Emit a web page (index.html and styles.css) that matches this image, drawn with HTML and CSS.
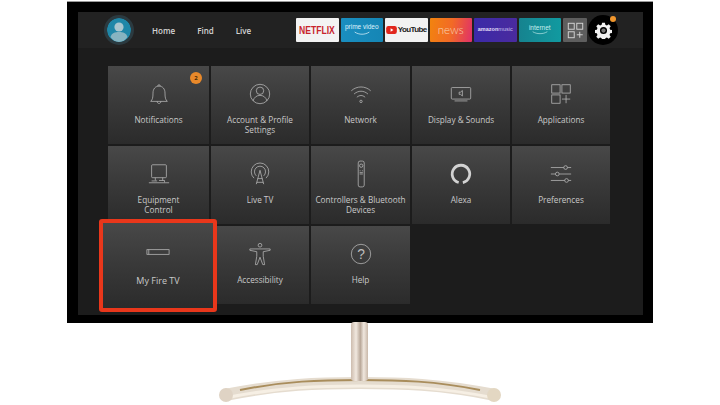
FILE: index.html
```html
<!DOCTYPE html>
<html lang="en">
<head>
<meta charset="utf-8">
<title>Fire TV Settings</title>
<link rel="stylesheet" href="styles.css">
</head>
<body>
<main class="display">
  <div class="monitor">
    <div class="screen">
      <header class="topbar">
        <div class="avatar">
          <svg viewBox="0 0 24 24" width="24" height="24"><circle cx="12" cy="12" r="12" fill="#1f87a8"/><circle cx="12" cy="9" r="4.6" fill="#a9c6cf"/><path d="M3.5 19c1-4 4.500-5 8.500-5s7.500 1 8.500 5c-2 3-5 5-8.500 5s-6.500-2-8.500-5z" fill="#86b4c1"/></svg>
        </div>
        <nav class="links"><span>Home</span><span>Find</span><span>Live</span></nav>
        <div class="apps">
          <div class="app app-netflix"><span>NETFLIX</span></div>
          <div class="app app-prime"><span>prime video</span><svg viewBox="0 0 30 6" width="22" height="5"><path d="M5 1c6 4 14 4 20 0" fill="none" stroke="#dff3fb" stroke-width="1"/></svg></div>
          <div class="app app-youtube"><svg viewBox="0 0 12 9" width="11" height="8"><rect width="12" height="9" rx="2.500" fill="#e1261c"/><path d="M5 2.500v4l3.200-2z" fill="#fff"/></svg><span>YouTube</span></div>
          <div class="app app-news">news</div>
          <div class="app app-music"><span><b>amazon</b>music</span></div>
          <div class="app app-internet"><span>internet</span><svg viewBox="0 0 30 6" width="20" height="4"><path d="M4 1c6 4 16 4 22 0" fill="none" stroke="#bfeaea" stroke-width="1"/></svg></div>
          <div class="app app-all">
            <svg viewBox="0 0 20 20" width="17" height="17" fill="none" stroke="#d6d6d6" stroke-width="1.100"><rect x="1.500" y="1.500" width="7" height="7"/><rect x="11.500" y="1.500" width="7" height="7"/><rect x="1.500" y="11.500" width="7" height="7"/><path d="M15 11.500v7M11.500 15h7"/></svg>
          </div>
        </div>
        <div class="gear">
          <svg viewBox="0 0 24 24" width="17" height="17"><path fill-rule="evenodd" fill="#f2f2f2" d="M10 1h4l.6 3 2.200.9 2.600-1.700 2.800 2.800-1.700 2.600.9 2.200 3 .6v4l-3 .6-.9 2.200 1.700 2.600-2.800 2.800-2.600-1.700-2.200.9-.6 3h-4l-.6-3-2.200-.9-2.600 1.700-2.800-2.800 1.700-2.600-.9-2.200-3-.6v-4l3-.6.9-2.200-1.700-2.600 2.800-2.800 2.600 1.700 2.200-.9zM12 7a5 5 0 1 0 0 10 5 5 0 0 0 0-10z"/><circle cx="12" cy="12" r="3" fill="#777"/></svg>
          <i class="gear-dot"></i>
        </div>
      </header>

      <section class="grid">
        <article class="tile">
          <b class="badge">2</b>
          <svg class="ico" viewBox="0 0 26 26"><path d="M4 21c2-2 2.500-4 2.500-9 0-4.500 2.500-7.500 6.500-7.500s6.500 3 6.500 7.500c0 5 .5 7 2.500 9zM11.500 4.500c0-2 3-2 3 0M11 21c0 3 4 3 4 0"/></svg>
          <p>Notifications</p>
        </article>
        <article class="tile">
          <svg class="ico" viewBox="0 0 26 26"><circle cx="13" cy="13" r="10.500"/><circle cx="13" cy="9.500" r="4"/><path d="M5.500 20.500c1-4 4-6 7.500-6s6.500 2 7.500 6"/></svg>
          <p>Account &amp; Profile<br>Settings</p>
        </article>
        <article class="tile">
          <svg class="ico" viewBox="0 0 26 26"><path d="M2.500 9.500c6-5.500 15-5.500 21 0M5.500 13c4.500-4 10.500-4 15 0M8.500 16.500c3-2.500 6-2.500 9 0"/><circle cx="13" cy="21" r="1.300"/></svg>
          <p>Network</p>
        </article>
        <article class="tile">
          <svg class="ico" viewBox="0 0 26 26"><rect x="2.500" y="6" width="21" height="12.500" rx="1"/><path d="M6 20.500h14M11 11h1.500l2-1.800v6l-2-1.800H11z"/></svg>
          <p>Display &amp; Sounds</p>
        </article>
        <article class="tile">
          <svg class="ico" viewBox="0 0 26 26"><rect x="3" y="3" width="9" height="9"/><rect x="14" y="3" width="9" height="9"/><rect x="3" y="14" width="9" height="9"/><path d="M18.500 14v9M14 18.500h9"/></svg>
          <p>Applications</p>
        </article>

        <article class="tile">
          <svg class="ico" viewBox="0 0 26 26"><rect x="5" y="3" width="16" height="14" rx="1"/><path d="M9 17v3M17 17v3M2 22.500h22M5 20.500h6M13 20h6v2"/></svg>
          <p>Equipment<br>Control</p>
        </article>
        <article class="tile">
          <svg class="ico" viewBox="0 0 26 26"><path d="M6.500 17.500a9.500 9.500 0 1 1 13 0M9 15a6 6 0 1 1 8 0M9 24l4-15 4 15M10.500 18h5M9.500 22h7"/></svg>
          <p>Live TV</p>
        </article>
        <article class="tile">
          <svg class="ico" viewBox="0 0 26 26"><rect x="10" y="-1" width="6.500" height="28" rx="2"/><circle cx="13.200" cy="4" r="1.800"/><path d="M11.500 9.500h1M14 9.500h1M11.500 11.500h3.500M11.500 13h3.500"/></svg>
          <p>Controllers &amp; Bluetooth<br>Devices</p>
        </article>
        <article class="tile">
          <svg class="ico ico-alexa" viewBox="0 0 26 26"><path d="M10.500 22.200A9.500 9.500 0 1 1 15 22.300"/></svg>
          <p>Alexa</p>
        </article>
        <article class="tile">
          <svg class="ico" viewBox="0 0 26 26"><path d="M2 6h14M20 6h4M2 13h5M11 13h13M2 20h15M21 20h3"/><circle cx="18" cy="6" r="2"/><circle cx="9" cy="13" r="2"/><circle cx="19" cy="20" r="2"/></svg>
          <p>Preferences</p>
        </article>

        <article class="tile tile-focus">
          <svg class="ico" viewBox="0 0 26 26"><rect x="1" y="10.500" width="24" height="5"/><path d="M3 10.500v5"/></svg>
          <p>My Fire TV</p>
        </article>
        <article class="tile">
          <svg class="ico" viewBox="0 0 26 26"><circle cx="13" cy="3.500" r="2"/><path d="M2 7.500h22v1.500l-7.500 1.500v5l1.500 9h-2l-3-8-3 8H8l1.500-9v-5L2 9z"/></svg>
          <p>Accessibility</p>
        </article>
        <article class="tile">
          <svg class="ico" viewBox="0 0 26 26"><circle cx="13" cy="13" r="10.500"/><text x="13" y="18" text-anchor="middle">?</text></svg>
          <p>Help</p>
        </article>
      </section>
    </div>
  </div>
  <svg class="stand" viewBox="0 0 300 82" width="300" height="82" aria-hidden="true">
    <defs>
      <linearGradient id="neck" x1="0" x2="1" y1="0" y2="0"><stop offset="0" stop-color="#cdbcae"/><stop offset=".3" stop-color="#f1e8df"/><stop offset=".55" stop-color="#b9a899"/><stop offset=".75" stop-color="#f0e7de"/><stop offset="1" stop-color="#c9b8a9"/></linearGradient>
      <linearGradient id="arm" x1="0" x2="0" y1="0" y2="1"><stop offset="0" stop-color="#f6f2ec"/><stop offset=".3" stop-color="#c8ad7c"/><stop offset=".55" stop-color="#f4ebdc"/><stop offset="1" stop-color="#d6ccc2"/></linearGradient>
    </defs>
    <path d="M15 73C70 62 110 61 150 61s80 1 135 12" fill="none" stroke="#e5dccf" stroke-width="12"/>
    <path d="M30 68C75 59 110 58 150 58s75 1 120 10" fill="none" stroke="#a98d5c" stroke-width="2"/>
    <path d="M15 76C70 65 110 64 150 64s80 1 135 12" fill="none" stroke="#f6efe4" stroke-width="3"/>
    <rect x="141" y="0" width="17" height="59" rx="3" fill="url(#neck)"/>
    <circle cx="16" cy="73" r="7" fill="#dfd3c4"/>
    <circle cx="284" cy="73" r="7" fill="#e3d7c2"/>
  </svg>
</main>
</body>
</html>
```
FILE: styles.css
```css
* { box-sizing: border-box; }
html, body { margin: 0; height: 405px; overflow: hidden; background: #fff; }
body { font-family: "Open Sans", "Liberation Sans", sans-serif; }

.display { display: flex; flex-direction: column; align-items: center; padding-top: 1px; }

.monitor {
  width: 586px;
  height: 322px;
  background: #000;
  border-top: 1px solid #9a9a9a;
  padding: 10px 10px 8px 11px;
}
.screen {
  height: 303px;
  background: #1c1c1c;
  padding: 0 0 0 30px;
}

.topbar {
  height: 36px;
  margin: 0 0 18px -30px;
  padding: 0 0 0 26px;
  display: flex;
  align-items: center;
  background: #222;
}
.avatar {
  width: 30px; height: 30px;
  border-radius: 50%;
  background: #2b3a40;
  display: flex; align-items: center; justify-content: center;
}
.avatar svg { border-radius: 50%; display: block; }

.links {
  display: flex;
  gap: 22px;
  margin-left: 18px;
  width: 144px;
  font-size: 8px;
  font-weight: 600;
  color: #d4d4d4;
}
.apps { display: flex; align-items: center; gap: 2px; }
.app {
  width: 42.500px; height: 24px;
  border-radius: 1px;
  display: flex; flex-direction: column; align-items: center; justify-content: center;
  overflow: hidden;
  font-family: "Liberation Sans", sans-serif;
  line-height: 1;
}
.app-netflix { background: #f3f3f3; color: #c8242c; font-weight: 700; font-size: 11px; }
.app-netflix span { transform: scaleX(.78); }
.app-prime { background: linear-gradient(90deg, #1a8ec0, #1586b5); color: #dff3fb; font-size: 6.500px; }
.app-youtube { background: #f2f2f2; color: #222; flex-direction: row; gap: 1px; font-size: 8px; font-weight: 700; letter-spacing: -.6px; }
.app-news { background: linear-gradient(100deg, #f2840e, #f26a26 50%, #e0306a); color: #f9d7b5; font-family: Lato, sans-serif; font-weight: 300; font-size: 11.500px; }
.app-music { background: linear-gradient(90deg, #3b2aa8, #4a2a9e); color: #c9c0ee; font-size: 5.500px; }
.app-music b { color: #e4dff7; }
.app-internet { background: linear-gradient(90deg, #16838f, #119aa0); color: #c8eeee; font-size: 6.500px; }
.app-all { width: 24px; background: #5e5e5e; }
.gear {
  width: 30px; height: 30px;
  border-radius: 50%;
  background: #000;
  margin-left: 1px;
  display: flex; align-items: center; justify-content: center;
  position: relative;
}
.gear-dot {
  position: absolute;
  right: 2px; top: 1px;
  width: 6px; height: 6px;
  border-radius: 50%;
  background: #f0962d;
}

.grid {
  display: grid;
  grid-template-columns: 101px 98px 99px 98px 98px;
  grid-auto-rows: 78px;
  gap: 2px;
  width: 502px;
}
.tile {
  position: relative;
  background: linear-gradient(180deg, #484848 0%, #3a3a3a 45%, #2b2b2b 100%);
  display: flex;
  flex-direction: column;
  align-items: center;
  padding: 16px 4px 0;
  color: #c9c9c9;
  font-size: 8.200px;
  text-align: center;
}
.tile p { margin: 9px 0 0; line-height: 10px; white-space: nowrap; }
.ico {
  width: 24px; height: 24px;
  flex: none;
  fill: none;
  stroke: #bdbdbd;
  stroke-width: .8;
  overflow: visible;
}
.ico text { font: 400 15px "Liberation Sans", sans-serif; fill: #bdbdbd; stroke: none; }
.ico-alexa { stroke: #d2d2d2; stroke-width: 3; }
.badge {
  position: absolute;
  top: 6px; right: 7px;
  width: 12px; height: 12px;
  border-radius: 50%;
  background: #e9892a;
  color: #4a2a05;
  font-size: 6px;
  line-height: 12px;
}
.tile-focus {
  margin: -7px -8px -8px -9px;
  z-index: 1;
  border: 4px solid #e9371b;
  border-radius: 3px;
  padding-top: 17px;
  font-size: 9px;
}
.tile-focus p { margin-top: 12px; }

.stand { display: block; margin-top: -1px; }
```
